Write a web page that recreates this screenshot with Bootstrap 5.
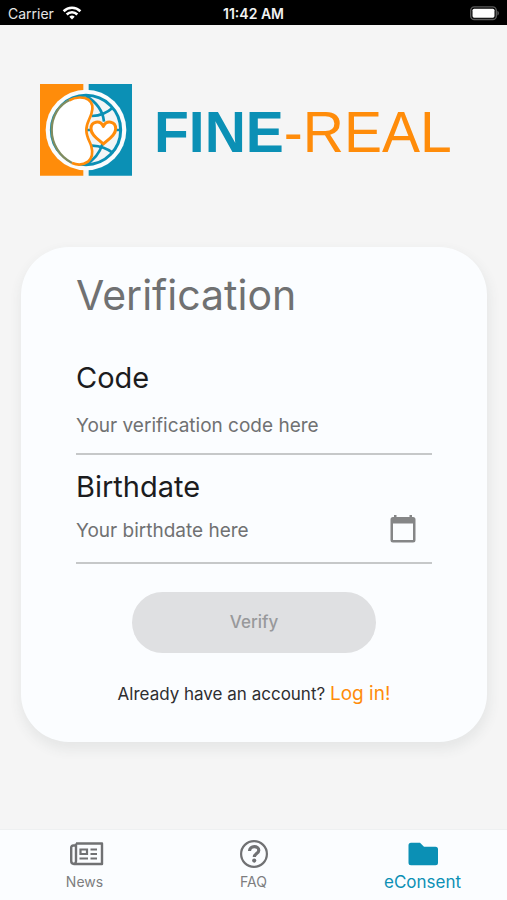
<!DOCTYPE html>
<html lang="en">
<head>
<meta charset="utf-8">
<meta name="viewport" content="width=device-width, initial-scale=1">
<title>FINE-REAL – Verification</title>
<link href="https://cdn.jsdelivr.net/npm/bootstrap@5.3.0/dist/css/bootstrap.min.css" rel="stylesheet">
<style>
  :root { --teal: #0b90b5; --orange: #ff8c0a; --surface: #fbfdff; --muted: #707172; }
  body { background: #f5f5f5; font-family: Inter, "Liberation Sans", sans-serif; color: #1c1c1e; }
  .status-bar { background: #000; color: #e6e6e6; height: 25px; font-size: 14px; line-height: 24px; padding: 2px 8px 0; }
  .status-time { font-weight: 600; color: #f2f2f2; }
  .brand { padding: 59px 40px 0; gap: 22px; }
  .brand-text { font: 57px/88px "Liberation Sans", sans-serif; color: var(--orange); padding-top: 4px; }
  .brand-text b { color: var(--teal); }
  .panel { background: var(--surface); border-radius: 48px; margin: 71px 20px 0 21px; padding: 24px 55px 36px; box-shadow: 1px 6px 12px 2px rgba(60, 80, 80, .08); }
  .panel h1 { font-size: 41px; line-height: 48px; font-weight: 400; color: var(--muted); margin-bottom: 41px; }
  .field-label { font-size: 29px; line-height: 36px; display: block; }
  .field { border-bottom: 2px solid #c6c8c9; }
  .field .form-control { background: transparent; border: 0; border-radius: 0; box-shadow: none; padding: 0; font-size: 19px; line-height: 28px; color: #1c1c1e; }
  .field .form-control::placeholder { color: var(--muted); opacity: 1; }
  .field-code { padding: 16px 0 13px; margin-bottom: 14px; }
  .field-date { padding: 10px 15px 15px 0; }
  .icon-btn { color: #858687; line-height: 0; }
  .verify { width: 244px; height: 61px; font-size: 17px; font-weight: 500; margin-top: 28px; }
  .verify:disabled { background: #dfe0e2; border: 0; color: #98999b; opacity: 1; }
  .login-line { font-size: 17px; line-height: 24px; margin: 29px -8px 0; color: #2e2e30; }
  .login-line a { color: var(--orange); font-size: 19px; text-decoration: none; }
  .tab-bar { background: var(--surface); border-top: 1px solid #eef0f1; height: 71px; }
  .tab-bar a { color: #7d7e80; font-size: 14px; line-height: 20px; padding-top: 10px; text-decoration: none; }
  .tab-bar svg { color: #707173; margin-bottom: 4px; }
  .tab-bar a.active, .tab-bar .active svg { color: var(--teal); }
  .tab-bar a.active { font-size: 17px; }
</style>
</head>
<body class="d-flex flex-column min-vh-100">
  <header class="status-bar row g-0 align-items-center">
    <div class="col d-flex align-items-center gap-1">
      <span>Carrier</span>
      <svg class="ms-1" width="20" height="16" viewBox="0 0 20 16" fill="none" stroke="#fff" stroke-width="2.6" aria-hidden="true">
        <path d="M1.6 5.200a12 12 0 0 1 16.800 0M4.700 8.500a7.500 7.500 0 0 1 10.600 0"/>
        <path d="M10 13.400 7.300 10.700a3.900 3.900 0 0 1 5.400 0z" fill="#fff" stroke="none"/>
      </svg>
    </div>
    <div class="col-auto status-time">11:42 AM</div>
    <div class="col d-flex justify-content-end">
      <svg width="31" height="16" viewBox="0 0 31 16" aria-hidden="true">
        <rect x="2.700" y=".9" width="25.600" height="12.600" rx="3.600" fill="none" stroke="#5a5a5a" stroke-width="1.400"/>
        <rect x="4.500" y="2.700" width="22" height="9" rx="1.600" fill="#fff"/>
        <path d="M29.400 4.800c2 1.100 2 3.700 0 4.800z" fill="#5a5a5a"/>
      </svg>
    </div>
  </header>

  <main class="flex-grow-1">
    <div class="brand d-flex align-items-center">
      <svg class="flex-shrink-0" width="92" height="92" viewBox="30 26 276 276" fill="none" aria-hidden="true">
        <path fill="#ff8c0a" d="M30 26h130v275H30z"/>
        <path fill="#0b90b5" d="M176 26h130v275H176z"/>
        <circle cx="168" cy="164" r="121" fill="#fbfcfd"/>
        <circle cx="168" cy="164" r="104" fill="#f3f5f6" stroke="#0b90b5" stroke-width="9"/>
        <g stroke="#0b90b5" stroke-width="8">
          <path d="M168 62q49 29 54 77M186 122q37-2 62-25M168 267q36-19 50-62M186 211q37 1 64 23M170 164h14M257 164h16"/>
        </g>
        <path fill="#fff" d="M154 65C188 67 190 91 186 108c-4 18-17 32-17 56s13 39 17 57c4 18-2 38-34 46C98 266 67 222 67 165S99 66 154 65z"/>
        <path stroke="#808c5f" stroke-width="7" d="M119 74C87 88 65 123 65 164s23 79 61 99"/>
        <path stroke="#ff8c0a" stroke-width="8" d="M118 75c17-10 43-12 57-2 16 11 14 28 9 43-5 16-15 27-15 48 0 22 11 34 15 49 5 18 4 34-10 46-14 10-31 11-48 4"/>
        <path fill="#fff" stroke="#ff8c0a" stroke-width="9" stroke-linejoin="round" d="M220 206c-13-13-37-25-37-46 0-22 27-27 37-7 10-20 37-15 37 7 0 21-24 33-37 46z"/>
      </svg>
      <div class="brand-text text-nowrap"><b>FINE</b>-REAL</div>
    </div>

    <form class="panel">
      <h1>Verification</h1>
      <label class="field-label" for="code">Code</label>
      <div class="field field-code">
        <input class="form-control" id="code" type="text" placeholder="Your verification code here">
      </div>
      <label class="field-label" for="birthdate">Birthdate</label>
      <div class="field field-date d-flex align-items-center">
        <input class="form-control" id="birthdate" type="text" placeholder="Your birthdate here">
        <button class="btn px-0 pt-0 pb-1 border-0 icon-btn" type="button" aria-label="Choose date">
          <svg width="28" height="28" viewBox="0 0 28 28" aria-hidden="true">
            <path fill="currentColor" fill-rule="evenodd" d="M5 0h2.500v2h13V0H23v2h1a2.500 2.500 0 0 1 2.500 2.500v20.500A2.500 2.500 0 0 1 24 27.500H4A2.500 2.500 0 0 1 1.500 25V4.500A2.500 2.500 0 0 1 4 2h1zM4 8.600v16.400h20V8.600z"/>
          </svg>
        </button>
      </div>
      <div class="text-center">
        <button class="btn rounded-pill verify" type="submit" disabled>Verify</button>
        <p class="login-line text-nowrap">Already have an account? <a href="#login">Log in!</a></p>
      </div>
    </form>
  </main>

  <nav class="tab-bar row g-0 text-center" aria-label="Main">
    <a class="col d-flex flex-column align-items-center" href="#news">
      <svg class="ms-1" width="34" height="28" viewBox="0 0 34 28" fill="none" stroke="currentColor" stroke-width="2.400" aria-hidden="true">
        <path d="M6 3.500h26v20.500H4A3 3 0 0 1 1.200 21V7.500a2 2 0 0 1 2-2H6M6 3.500v17.500a3 3 0 0 1-2 3" stroke-linejoin="round"/>
        <path d="M10.500 9.500h6.500v4.500h-6.500zM9.500 18.500H18M20.500 9.500H27M20.500 14H27M20.500 18.500H27" stroke-width="2.200"/>
      </svg>
      News
    </a>
    <a class="col d-flex flex-column align-items-center" href="#faq">
      <svg width="30" height="28" viewBox="0 0 30 28" fill="none" stroke="currentColor" aria-hidden="true">
        <circle cx="15" cy="14" r="12.900" stroke-width="2.200"/>
        <path stroke-width="3.200" d="M10.500 11c.2-5.800 9.300-5.600 9.300-.8 0 3.300-4.500 3.200-4.500 6.800"/>
        <circle cx="15.200" cy="20.600" r="2.100" fill="currentColor" stroke="none"/>
      </svg>
      FAQ
    </a>
    <a class="col d-flex flex-column align-items-center active" href="#econsent" aria-current="page">
      <svg width="30" height="28" viewBox="0 0 30 28" aria-hidden="true">
        <path fill="currentColor" d="M3 2.700h9l4 4h11.500a2.500 2.500 0 0 1 2.500 2.500v13.500a2.500 2.500 0 0 1-2.500 2.500H3a2.500 2.500 0 0 1-2.500-2.500V5.200A2.500 2.500 0 0 1 3 2.700z"/>
      </svg>
      eConsent
    </a>
  </nav>
<script src="https://cdn.jsdelivr.net/npm/bootstrap@5.3.0/dist/js/bootstrap.bundle.min.js"></script>
</body>
</html>
